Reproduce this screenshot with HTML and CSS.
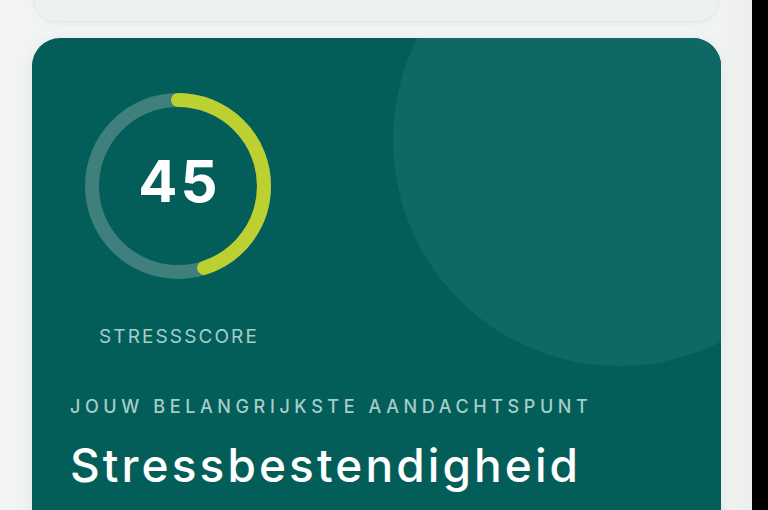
FILE: index.html
```html
<!DOCTYPE html>
<html lang="nl">
<head>
<meta charset="utf-8">
<title>Stressscore</title>
<link rel="stylesheet" href="styles.css">
</head>
<body>
<div class="screen">
  <main class="page">
    <div class="prev-card"></div>
    <section class="score-card">
      <div class="deco"></div>
      <div class="score-block">
        <div class="ring">
          <svg class="ring-svg" viewBox="0 0 186 186" width="186" height="186">
            <circle class="ring-track" cx="93" cy="93" r="86"></circle>
            <circle class="ring-progress" cx="93" cy="93" r="86" stroke-dasharray="243.16 540.35" transform="rotate(-90 93 93)"></circle>
          </svg>
          <span class="ring-value">45</span>
        </div>
        <div class="score-label">STRESSSCORE</div>
      </div>
      <div class="focus">
        <div class="focus-kicker">JOUW BELANGRIJKSTE AANDACHTSPUNT</div>
        <h2 class="focus-title">Stressbestendigheid</h2>
      </div>
    </section>
  </main>
  <div class="edge"></div>
</div>
</body>
</html>
```
FILE: styles.css
```css
* { box-sizing: border-box; }
html, body { margin: 0; padding: 0; }
body {
  background: #f2f4f4;
  font-family: Inter, "Open Sans", "Liberation Sans", sans-serif;
  overflow: hidden;
}
.screen {
  display: flex;
  height: 510px;
  overflow: hidden;
}
.page {
  width: 752px;
  flex: none;
  padding: 0 31px 0 32px;
  display: flex;
  flex-direction: column;
  gap: 16px;
  background: linear-gradient(to right, #f2f4f4 0, #f2f4f4 720px, #eceeee 752px);
}
.edge {
  flex: 1;
  background: #000;
}
.prev-card {
  height: 60px;
  margin-top: -38px;
  margin-left: 1px;
  margin-right: 1px;
  border-radius: 0 0 24px 24px;
  background: #eef1f2;
  border: 1px solid #e6eaeb;
  box-shadow: 0 2px 4px rgba(0, 0, 0, 0.04);
  flex: none;
}
.score-card {
  position: relative;
  overflow: hidden;
  flex: none;
  height: 600px;
  background: #035e5a;
  border-radius: 28px;
  padding: 55px 38px 40px 38px;
  color: #fff;
  box-shadow: 0 4px 14px rgba(0, 40, 40, 0.08);
}
.deco {
  position: absolute;
  top: -124px;
  right: -124px;
  width: 452px;
  height: 452px;
  border-radius: 50%;
  background: #0e6864;
}
.score-block {
  position: relative;
  width: 216px;
  display: flex;
  flex-direction: column;
  align-items: center;
}
.ring {
  position: relative;
  width: 186px;
  height: 186px;
  display: flex;
  align-items: center;
  justify-content: center;
}
.ring-svg {
  position: absolute;
  inset: 0;
}
.ring-track {
  fill: none;
  stroke: #3f7f7c;
  stroke-width: 14;
}
.ring-progress {
  fill: none;
  stroke: #bdd031;
  stroke-width: 14;
  stroke-linecap: round;
}
.ring-value {
  position: relative;
  font-size: 58px;
  font-weight: 700;
  letter-spacing: 3px;
  padding-left: 3px;
  padding-bottom: 10px;
  line-height: 1;
  color: #fff;
}
.score-label {
  margin-top: 44px;
  font-size: 19px;
  line-height: 27px;
  letter-spacing: 2.1px;
  padding-left: 2px;
  color: #a6cdc9;
}
.focus {
  position: relative;
  margin-top: 45px;
}
.focus-kicker {
  font-size: 18px;
  line-height: 24px;
  letter-spacing: 4.6px;
  color: #a6cdc9;
  font-weight: 500;
}
.focus-title {
  margin: 17px 0 0 0;
  font-size: 46px;
  line-height: 58px;
  font-weight: 500;
  letter-spacing: 3.1px;
  color: #fff;
}
```
